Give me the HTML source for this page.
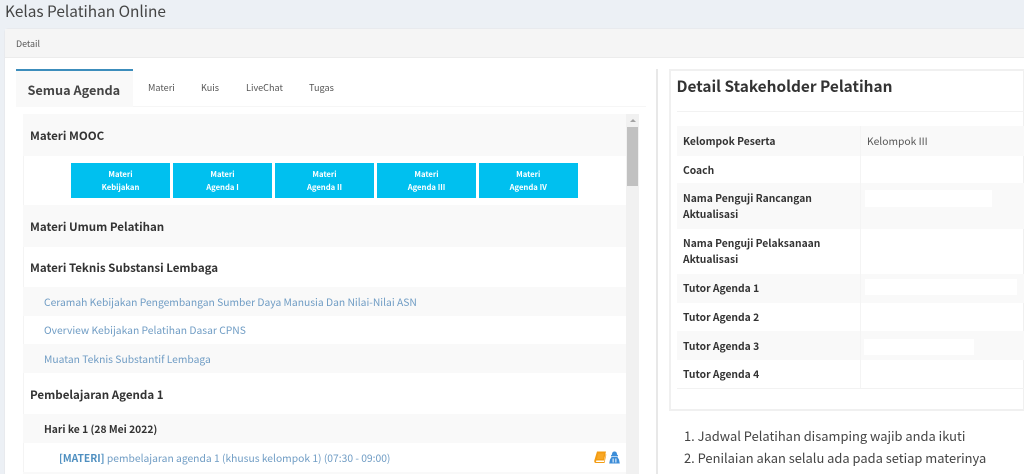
<!DOCTYPE html>
<html><head><meta charset="utf-8">
<style>
html,body{margin:0;padding:0}
body{width:1024px;height:474px;overflow:hidden;position:relative;background:#ecf0f5;font-family:"Noto Sans CJK JP","Liberation Sans",sans-serif;color:#333}
.a{position:absolute;white-space:nowrap}
.r{position:absolute;left:23px;width:603px}
.t{position:absolute;white-space:nowrap;font-size:13px;line-height:18px}
.b{font-weight:700}
.h{font-size:11.55px;font-weight:700;color:#333;left:30px}
.l{font-size:10.3px;color:#6f9cc4;left:44px}
.btn{position:absolute;top:163px;height:35px;background:#00c0ef;color:#fff;font-size:7.7px;font-weight:700;line-height:12.5px;text-align:center;padding-top:6px;box-sizing:border-box}
.k{position:absolute;left:683px;font-size:10.3px;font-weight:700;color:#333;line-height:16px;white-space:nowrap}
.w{position:absolute;background:#fff}
.f{position:absolute;left:677px;width:347px;background:#f9f9f9}
.tab{position:absolute;top:79px;font-size:9.1px;color:#555;line-height:16px}
</style></head><body>
<div class="a" style="left:5px;top:0;font-size:15.4px;line-height:23px;color:#444">Kelas Pelatihan Online</div>
<div class="a" style="left:5px;top:29px;width:1019px;height:445px;background:#fff;border-radius:3px 0 0 0;box-shadow:0 0 1px #ccc"></div>
<div class="a" style="left:5px;top:29px;width:1019px;height:29px;background:#f5f5f5;border-bottom:1px solid #ececec;box-sizing:border-box"></div>
<div class="a" style="left:16px;top:36px;font-size:8.9px;line-height:16px;color:#555">Detail</div>

<div class="a" style="left:16px;top:106px;width:630px;height:1px;background:#f6f6f6"></div>
<div class="a" style="left:16px;top:69px;width:117px;height:38px;background:#f9f9f9;border-top:2px solid #3c8dbc;box-sizing:border-box"></div>
<div class="a b" style="left:27.5px;top:80px;font-size:12.7px;line-height:20px;color:#444">Semua Agenda</div>
<div class="tab" style="left:148px">Materi</div>
<div class="tab" style="left:201px">Kuis</div>
<div class="tab" style="left:246px">LiveChat</div>
<div class="tab" style="left:309px">Tugas</div>

<div class="a" style="left:23px;top:114px;width:1px;height:360px;background:#f4f4f4"></div>
<div class="r" style="top:114px;height:42px;background:#f9f9f9"></div>
<div class="r" style="top:205px;height:42px;background:#f9f9f9"></div>
<div class="r" style="top:287px;height:29px;background:#f9f9f9"></div>
<div class="r" style="top:344px;height:29px;background:#f9f9f9"></div>
<div class="r" style="top:414px;height:29px;background:#f9f9f9"></div>
<div class="r" style="top:472px;height:2px;background:#f9f9f9"></div>

<div class="t h" style="top:127px">Materi MOOC</div>
<div class="btn" style="left:71px;width:99px">Materi<br>Kebijakan</div>
<div class="btn" style="left:173px;width:99px">Materi<br>Agenda I</div>
<div class="btn" style="left:275px;width:99px">Materi<br>Agenda II</div>
<div class="btn" style="left:377px;width:99px">Materi<br>Agenda III</div>
<div class="btn" style="left:478.5px;width:99.5px">Materi<br>Agenda IV</div>
<div class="t h" style="top:218px">Materi Umum Pelatihan</div>
<div class="t h" style="top:259px">Materi Teknis Substansi Lembaga</div>
<div class="t l" style="top:293px">Ceramah Kebijakan Pengembangan Sumber Daya Manusia Dan Nilai-Nilai ASN</div>
<div class="t l" style="top:321px">Overview Kebijakan Pelatihan Dasar CPNS</div>
<div class="t l" style="top:350px">Muatan Teknis Substantif Lembaga</div>
<div class="t h" style="top:386px">Pembelajaran Agenda 1</div>
<div class="t b" style="left:44px;top:420px;font-size:10.3px;color:#333">Hari ke 1 (28 Mei 2022)</div>
<div class="t" style="left:59px;top:449px;font-size:10.3px;color:#6f9cc4"><span style="font-weight:700;color:#4f8fc0">[MATERI]</span> pembelajaran agenda 1 (khusus kelompok 1) (07:30 - 09:00)</div>

<svg class="a" style="left:594px;top:451px" width="27" height="13" viewBox="0 0 27 13">
<path d="M3 .5H12L10 9.5H3C1.8 9.5 1.5 10.5 2.5 11H10L11.8 3 12.3 3.6 10.5 12H2C.6 12 0 11 .3 9.5Z" fill="#f39c12"/>
<path d="M4 2.5H10L9 8H3Z" fill="#f9a825"/>
<path d="M18 3.5C18 1.5 19 .5 20.5 .5S23 1.5 23 3.5L24 4.4V5.4H17V4.4ZM17.6 6H23.4L25 8.5 25.8 12.5H15.2L16 8.5Z" fill="#3c8dd8"/>
<path d="M18.5 7.5H19.8V11.5H18.5ZM21.2 7.5H22.5V11.5H21.2Z" fill="#cfe3f7"/>
</svg>

<div class="a" style="left:626px;top:114px;width:13px;height:360px;background:#f1f1f1"></div>
<div class="a" style="left:627px;top:127px;width:11px;height:59px;background:#c1c1c1"></div>
<div class="a" style="left:630px;top:119px;width:0;height:0;border:3px solid transparent;border-top:0;border-bottom:3px solid #a3a3a3"></div>

<div class="a" style="left:656px;top:69px;width:2px;height:405px;background:#e8e8e8"></div>

<div class="a" style="left:669px;top:69px;width:356px;height:342px;border:2px solid #f0f0f0;box-sizing:border-box;background:#fff"></div>
<div class="a b" style="left:676.5px;top:74px;font-size:15.4px;line-height:24px;color:#333">Detail Stakeholder Pelatihan</div>
<div class="a" style="left:677px;top:111px;width:347px;height:1px;background:#f2f2f2"></div>

<div class="f" style="top:126px;height:30px"></div>
<div class="f" style="top:183px;height:46px"></div>
<div class="f" style="top:274px;height:29px"></div>
<div class="f" style="top:331px;height:29px"></div>
<div class="a" style="left:677px;top:388px;width:347px;height:1px;background:#f2f2f2"></div>
<div class="a" style="left:860px;top:126px;width:1px;height:262px;background:#f4f4f4"></div>
<div class="k" style="top:133px">Kelompok Peserta</div>
<div class="a" style="left:867px;top:133px;font-size:10.3px;line-height:16px;color:#555">Kelompok III</div>
<div class="k" style="top:162px">Coach</div>
<div class="k" style="top:190px">Nama Penguji Rancangan</div>
<div class="k" style="top:206px">Aktualisasi</div>
<div class="k" style="top:235px">Nama Penguji Pelaksanaan</div>
<div class="k" style="top:251px">Aktualisasi</div>
<div class="k" style="top:280px">Tutor Agenda 1</div>
<div class="k" style="top:309px">Tutor Agenda 2</div>
<div class="k" style="top:338px">Tutor Agenda 3</div>
<div class="k" style="top:366px">Tutor Agenda 4</div>
<div class="w" style="left:865px;top:190px;width:127px;height:17px"></div>
<div class="w" style="left:865px;top:279px;width:152px;height:16px"></div>
<div class="w" style="left:864px;top:339px;width:110px;height:16px"></div>

<div class="a" style="left:684px;top:425px;font-size:12.9px;line-height:22px;color:#444">1. Jadwal Pelatihan disamping wajib anda ikuti</div>
<div class="a" style="left:684px;top:447px;font-size:12.9px;line-height:22px;color:#444">2. Penilaian akan selalu ada pada setiap materinya</div>
</body></html>
